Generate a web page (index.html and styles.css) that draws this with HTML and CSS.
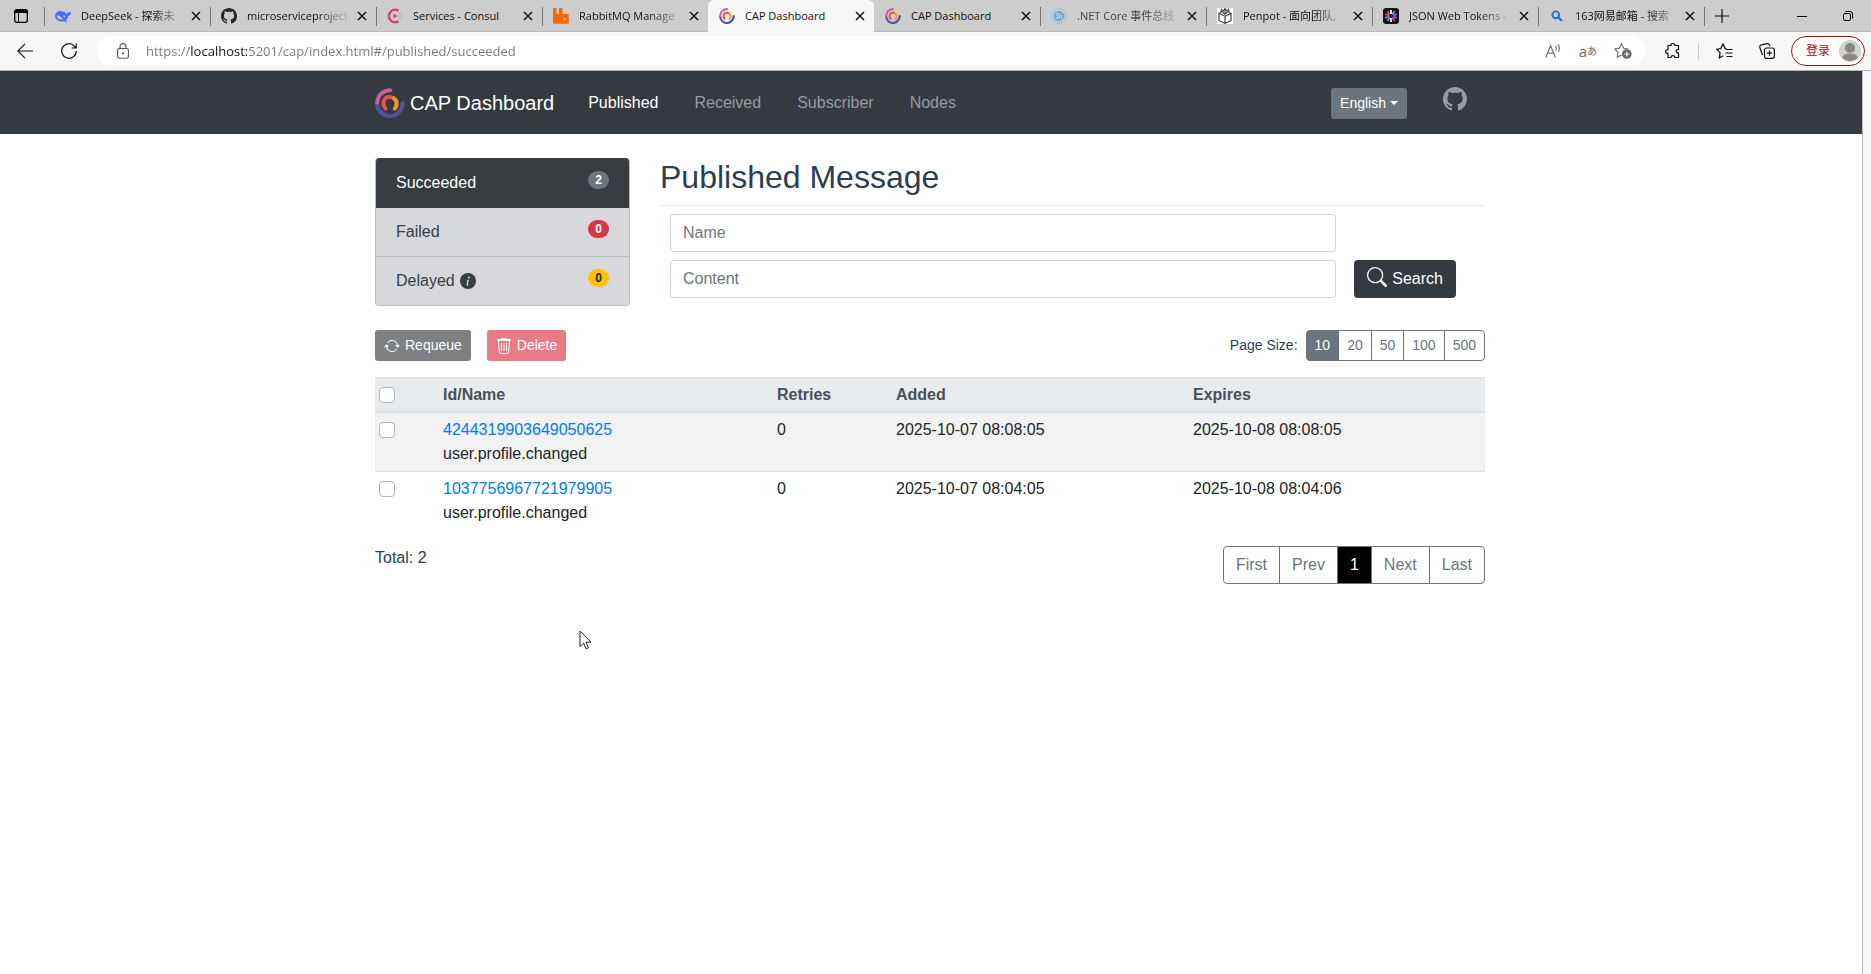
FILE: index.html
```html
<!DOCTYPE html>
<html lang="en">
<head>
<meta charset="utf-8">
<meta name="viewport" content="width=device-width, initial-scale=1">
<title>CAP Dashboard</title>
<link rel="stylesheet" href="styles.css">
</head>
<body>
<svg class="defs" aria-hidden="true">
  <symbol id="cap" viewBox="0 0 30 30"><g fill="none" stroke-width="4" stroke-linecap="round"><path stroke="#4b559f" stroke-linecap="butt" d="M2.200 16a12.600 12.600 0 0 0 25.300-1"/><path stroke="#4b559f" d="M27.500 15v.2"/><path stroke="#c65f9f" stroke-linecap="butt" d="M2.200 16.300C2 8 7 2.600 15 2.200"/><path stroke="#c65f9f" d="M15 2.200h.1"/><path stroke="#f7952b" d="M18 9.800c4.500 2 4.500 8 1.800 10.700"/><path stroke="#e8544a" d="M10.500 20.500C6 15 9.500 8 16 9.200"/></g></symbol>
  <symbol id="github" viewBox="0 0 16 16"><path d="M8 0C3.580 0 0 3.580 0 8c0 3.540 2.290 6.530 5.470 7.590.4.070.55-.17.55-.38 0-.19-.010-.82-.010-1.490-2.010.37-2.530-.49-2.690-.94-.09-.23-.48-.94-.82-1.130-.28-.15-.68-.52-.010-.53.63-.010 1.080.58 1.230.82.72 1.210 1.870.87 2.330.66.070-.52.28-.87.51-1.070-1.780-.2-3.640-.89-3.640-3.950 0-.87.31-1.590.82-2.150-.08-.2-.36-1.020.08-2.120 0 0 .67-.21 2.200.82.64-.18 1.320-.27 2-.27s1.360.09 2 .27c1.530-1.040 2.200-.82 2.200-.82.44 1.100.16 1.920.08 2.120.51.56.82 1.270.82 2.150 0 3.070-1.870 3.750-3.650 3.950.29.25.54.73.54 1.480 0 1.070-.010 1.930-.010 2.200 0 .21.15.46.55.38A8.010 8.010 0 0 0 16 8c0-4.420-3.580-8-8-8"/></symbol>
  <symbol id="close" viewBox="0 0 10 10"><path d="M1 1l8 8M9 1L1 9" fill="none" stroke="#111" stroke-width="1.500"/></symbol>
</svg>

<header class="browser">
  <div class="tabstrip">
    <button class="strip-btn tab-menu" aria-label="Tab actions menu"><svg width="14" height="14" viewBox="0 0 14 14"><rect x=".7" y=".7" width="12.600" height="12.600" rx="2" fill="none" stroke="#000" stroke-width="1.300"/><path d="M1 1h12v3H1z"/><path d="M4.500 4v9" stroke="#000"/></svg></button>
    <div class="tabs" role="tablist">
      <div class="tab" role="tab"><svg class="fav" viewBox="0 0 16 16"><path fill="#4d6bfe" d="M.2 8.500C.2 4.800 2.800 3 5.400 3c1.300 0 1.800.7 3 1 .4-1 1.300-.6 1.500.2.200 1 .8 1.700 1.500 2C11.200 4.900 12.400 5 13 4.200c.8.500 1.800.4 2.800-.7.4 2.400-.6 4.200-2.600 4.500-.1 2-1 3.300-2.200 4.500l1.200 1.200c-1.600.4-2.400.1-3.300-.5C4.400 14.300.2 12 .2 8.500z"/><path fill="#cdcdcd" d="M1.800 7.600c2.600-.5 5.100 1.500 6.300 4.300-1.200-.2-1.800-1-2.600-1.600-.3.600-.1 1.100.1 1.600C3 11 1.800 9.500 1.800 7.600zM8.200 7.200c1.300 0 2 .9 2 2.100-1.100.2-1.900-.8-2-2.100z"/></svg><span class="title fade">DeepSeek - 探索未</span><button class="x" aria-label="Close tab"><svg><use href="#close"/></svg></button></div>
      <div class="tab" role="tab"><svg class="fav gh"><use href="#github"/></svg><span class="title fade">microserviceproject</span><button class="x" aria-label="Close tab"><svg><use href="#close"/></svg></button></div>
      <div class="tab" role="tab"><svg class="fav" viewBox="0 0 16 16"><path d="M11.500 13.200A6.200 6.200 0 1 1 11.500 2.800" fill="none" stroke="#e03875" stroke-width="2.400"/><circle cx="7.800" cy="8" r="1.800" fill="#e03875"/><g fill="#e879a0"><circle cx="11.300" cy="8" r=".8"/><circle cx="13" cy="5.500" r=".7"/><circle cx="13" cy="10.500" r=".7"/><circle cx="14.600" cy="7" r=".6"/><circle cx="14.600" cy="9" r=".6"/></g></svg><span class="title">Services - Consul</span><button class="x" aria-label="Close tab"><svg><use href="#close"/></svg></button></div>
      <div class="tab" role="tab"><svg class="fav" viewBox="0 0 16 16"><path fill="#f60" fill-rule="evenodd" d="M.5 0H3q.5 0 .5.500v5q0 .6.600.6h1.300q.6 0 .6-.6v-5Q6 0 6.500 0H9q.5 0 .5.500v5q0 .6.600.6H15q.8 0 .8.800V15q0 .8-.8.800H.8Q0 15.800 0 15V.5Q0 0 .5 0zM10.300 10v2.500h2.500V10z"/></svg><span class="title fade">RabbitMQ Manage</span><button class="x" aria-label="Close tab"><svg><use href="#close"/></svg></button></div>
      <div class="tab active" role="tab" aria-selected="true"><svg class="fav"><use href="#cap"/></svg><span class="title">CAP Dashboard</span><button class="x" aria-label="Close tab"><svg><use href="#close"/></svg></button></div>
      <div class="tab" role="tab"><svg class="fav"><use href="#cap"/></svg><span class="title">CAP Dashboard</span><button class="x" aria-label="Close tab"><svg><use href="#close"/></svg></button></div>
      <div class="tab" role="tab"><svg class="fav" viewBox="0 0 16 16"><circle cx="8" cy="8" r="7.300" fill="none" stroke="#8fc3dc"/><circle cx="8" cy="8" r="5.300" fill="#7da3cf"/><g fill="none" stroke="#dbe6f0"><path d="M5.500 7.500a3 3 0 0 1 3 3M5.500 5.300a5.200 5.200 0 0 1 5.200 5.200"/></g><circle cx="6.200" cy="10" r=".8" fill="#dbe6f0"/></svg><span class="title fade muted">.NET Core 事件总线</span><button class="x" aria-label="Close tab"><svg><use href="#close"/></svg></button></div>
      <div class="tab" role="tab"><svg class="fav" viewBox="0 0 16 16"><path fill="#fff" d="M0 0h16v16H0z"/><g fill="none" stroke="#444" stroke-width="1.200"><path d="M2 5.500v7.200l6 2.600 6-2.600V5.500L8 8.200zM8 8.200v7M2 5.500l2-1M14 5.500l-2-1"/><path d="M4 5l.5-3.500L7 6M6 3l2-2.500L10 3M9 6l2.500-4.500L12 5M8 1v6"/></g></svg><span class="title fade">Penpot - 面向团队,</span><button class="x" aria-label="Close tab"><svg><use href="#close"/></svg></button></div>
      <div class="tab" role="tab"><svg class="fav" viewBox="0 0 16 16"><rect width="16" height="16" rx="3" fill="#16161a"/><g stroke-width="1.700"><path stroke="#fff" d="M8 2v4M8 10v4"/><path stroke="#00d7e8" d="M11.500 3.200L9.200 6.400M4.500 12.800l2.300-3.200"/><path stroke="#e94bd8" d="M13.700 6.100L9.900 7.400M2.300 9.900l3.800-1.300"/><path stroke="#7e5cf0" d="M13.700 9.900L9.900 8.600"/><path stroke="#ff4560" d="M4.500 3.200l2.300 3.200M2.300 6.100l3.800 1.300M11.500 12.800L9.200 9.600"/></g></svg><span class="title fade">JSON Web Tokens -</span><button class="x" aria-label="Close tab"><svg><use href="#close"/></svg></button></div>
      <div class="tab" role="tab"><svg class="fav" viewBox="0 0 16 16"><circle cx="6.800" cy="6.800" r="3.400" fill="none" stroke="#1b77cf" stroke-width="1.900"/><path d="M9.300 9.300l3.700 3.700" stroke="#1b77cf" stroke-width="2.200"/></svg><span class="title fade">163网易邮箱 - 搜索</span><button class="x" aria-label="Close tab"><svg><use href="#close"/></svg></button></div>
    </div>
    <button class="strip-btn new-tab" aria-label="New tab"><svg width="14" height="14" viewBox="0 0 14 14"><path d="M7 0v14M0 7h14" stroke="#111" stroke-width="1.200"/></svg></button>
    <div class="window-controls">
      <button class="strip-btn" aria-label="Minimize"><svg width="10" height="10" viewBox="0 0 10 10"><path d="M0 5.500h10" stroke="#000"/></svg></button>
      <button class="strip-btn" aria-label="Restore"><svg width="10" height="10" viewBox="0 0 10 10" fill="none" stroke="#000"><rect x=".5" y="2.500" width="7" height="7" rx="1.500"/><path d="M2.500.5H7A2.500 2.500 0 0 1 9.500 3v4.500"/></svg></button>
    </div>
  </div>

  <div class="toolbar">
    <button class="tool" aria-label="Back"><svg width="16" height="16" viewBox="0 0 16 16" fill="none" stroke="#111" stroke-width="1.100"><path d="M16 8H.8M8 .8L.8 8 8 15.200"/></svg></button>
    <button class="tool reload" aria-label="Reload"><svg width="16" height="16" viewBox="0 0 16 16" fill="none" stroke="#111" stroke-width="1.200"><path d="M15.300 8A7.300 7.300 0 1 1 13.400 3.100L15 5M15.200.5V5h-4.500"/></svg></button>
    <div class="address">
      <button class="tool" aria-label="Site information"><svg width="12" height="16" viewBox="0 0 12 16" fill="none" stroke="#555" stroke-width="1.100"><rect x=".6" y="5.500" width="10.800" height="9.800" rx="1.800"/><path d="M3 5.500V3.600a3 3 0 0 1 6 0v1.900"/><circle cx="6" cy="10.400" r=".6" fill="#555"/></svg></button>
      <input class="url" type="text" aria-label="Address" value="https://localhost:5201/cap/index.html#/published/succeeded">
      <button class="tool" aria-label="Read aloud"><svg width="17" height="16" viewBox="0 0 17 16" fill="none" stroke="#6a6a6a" stroke-width="1.100"><path d="M.8 14.500L5.600 2.500l4.800 12M2.500 10.300h6.200M10.200 3.200c1.300 1 1.300 3 .3 4.300M12.500 1.200c2.500 1.800 2.500 5.600.5 7.600"/></svg></button>
      <button class="tool translate" aria-label="Translate">a<small>あ</small></button>
      <button class="tool" aria-label="Add to favorites"><svg width="18" height="17" viewBox="0 0 18 17"><path d="M7.500 13L3.300 15.200l.8-4.800L.7 7l4.700-.7L7.500 1.500l2.200 4.800 4.600.7" fill="none" stroke="#6a6a6a" stroke-width="1.100"/><circle cx="12.800" cy="12" r="4.800" fill="#666"/><path d="M12.800 9.500v5M10.300 12h5" stroke="#fff" stroke-width="1.100"/></svg></button>
    </div>
    <button class="tool" aria-label="Extensions"><svg width="16" height="16" viewBox="0 0 16 16" fill="none" stroke="#111" stroke-width="1.200" stroke-linejoin="round"><path d="M3 2.500h3C5.800-.2 10-.2 9.800 2.500H13.500v4.200c-3.200-.4-3.200 3.600 0 3.200v4.600H9.800c.2-2.600-4-2.600-3.800 0H3v-4C-.2 10.800-.2 6.300 3 6.700z"/></svg></button>
    <span class="sep"></span>
    <button class="tool" aria-label="Favorites"><svg width="17" height="16" viewBox="0 0 17 16" fill="none" stroke="#111" stroke-width="1.200"><path d="M10.500 5.800L9.200 5.600 7 .9 4.800 5.600.7 6.200l3.400 3.400-.8 5.200L7 12.800M10 6.500h6.500M9.500 10h7M10.500 13.500h6"/></svg></button>
    <button class="tool" aria-label="Collections"><svg width="16" height="16" viewBox="0 0 16 16" fill="none" stroke="#111" stroke-width="1.200"><rect x="5.500" y="5" width="9.900" height="10.300" rx="2"/><path d="M10.500 7.500v5.300M7.800 10.200h5.300M3.500 12L1 5Q.2 2.500 2.500 1.800L8 .7Q10.300.2 11 2.800"/></svg></button>
    <button class="login" lang="zh">登录<svg width="22" height="22" viewBox="0 0 22 22"><circle cx="11" cy="11" r="11" fill="#d2d0ce"/><circle cx="11" cy="8" r="5" fill="#8a8684"/><path d="M3.500 18c0-3 3-4.500 7.500-4.500s7.500 1.500 7.500 4.500a11 11 0 0 1-15 0z" fill="#8a8684"/></svg></button>
  </div>
</header>

<div class="page">
  <nav class="navbar">
    <div class="container">
      <a class="brand" href="#/"><svg width="30" height="30"><use href="#cap"/></svg>CAP Dashboard</a>
      <a class="nav-link current" href="#/published">Published</a>
      <a class="nav-link" href="#/received">Received</a>
      <a class="nav-link" href="#/subscriber">Subscriber</a>
      <a class="nav-link" href="#/nodes">Nodes</a>
      <button class="btn-sm lang" aria-haspopup="true">English<span class="caret"></span></button>
      <a class="repo" href="#github" aria-label="GitHub"><svg width="24" height="24"><use href="#github"/></svg></a>
    </div>
  </nav>

  <main class="container content">
    <div class="top">
      <aside class="list">
        <a class="item on" href="#/published/succeeded"><span>Succeeded</span><span class="badge grey">2</span></a>
        <a class="item" href="#/published/failed"><span>Failed</span><span class="badge red">0</span></a>
        <a class="item" href="#/published/delayed"><span class="delayed">Delayed <svg width="16" height="16" viewBox="0 0 16 16"><circle cx="8" cy="8" r="8" fill="#383d41"/><path fill="#d6d8db" d="M8.930 6.588l-2.290.287-.082.380.450.083c.294.070.352.176.288.469l-.738 3.468c-.194.897.105 1.319.808 1.319.545 0 1.178-.252 1.465-.598l.088-.416c-.2.176-.492.246-.686.246-.275 0-.375-.193-.304-.533z"/><circle cx="9" cy="4.500" r="1" fill="#d6d8db"/></svg></span><span class="badge yellow">0</span></a>
      </aside>
      <section class="filter">
        <h1>Published Message</h1>
        <form class="search">
          <input class="field" type="text" placeholder="Name" aria-label="Name">
          <input class="field" type="text" placeholder="Content" aria-label="Content">
          <button class="btn-search" type="button"><svg width="20" height="20" viewBox="0 0 16 16" fill="#fff"><path d="M11.742 10.344a6.500 6.500 0 1 0-1.397 1.398h-.001q.044.060.098.115l3.850 3.850a1 1 0 0 0 1.415-1.414l-3.850-3.850a1 1 0 0 0-.115-.1zM12 6.500a5.500 5.500 0 1 1-11 0 5.500 5.500 0 0 1 11 0"/></svg>Search</button>
        </form>
      </section>
    </div>

    <div class="actions">
      <button class="btn-sm requeue"><svg width="16" height="16" viewBox="0 0 16 16" fill="#fff"><path d="M11.534 7h3.932a.25.25 0 0 1 .192.410l-1.966 2.360a.25.25 0 0 1-.384 0l-1.966-2.360a.25.25 0 0 1 .192-.410zm-11 2h3.932a.25.25 0 0 0 .192-.410L2.692 6.230a.25.25 0 0 0-.384 0L.342 8.590A.25.25 0 0 0 .534 9z"/><path d="M8 3c-1.552 0-2.940.707-3.857 1.818a.5.5 0 1 1-.771-.636A6.002 6.002 0 0 1 13.917 7H12.900A5 5 0 0 0 8 3M3.100 9a5.002 5.002 0 0 0 8.757 2.182.5.5 0 1 1 .771.636A6.002 6.002 0 0 1 2.083 9z"/></svg>Requeue</button>
      <button class="btn-sm delete"><svg width="16" height="16" viewBox="0 0 16 16" fill="none" stroke="#fff"><path d="M1.500 2.500h13v-1h-13zM5.500 1.200V.5h5v.7M2.500 3l.8 11q.1 1.500 1.500 1.500h6.400q1.400 0 1.500-1.500l.8-11M8 5v8M5.200 5l.4 8M10.800 5l-.4 8"/></svg>Delete</button>
      <span class="size-label" id="size-label">Page Size:</span>
      <div class="group small" role="group" aria-labelledby="size-label">
        <button class="on">10</button><button>20</button><button>50</button><button>100</button><button>500</button>
      </div>
    </div>

    <table class="messages">
      <colgroup><col class="c-check"><col class="c-name"><col class="c-retries"><col class="c-date"><col class="c-date"></colgroup>
      <thead><tr><th><input type="checkbox" aria-label="Select all"></th><th>Id/Name</th><th>Retries</th><th>Added</th><th>Expires</th></tr></thead>
      <tbody>
        <tr><td><input type="checkbox" aria-label="Select 4244319903649050625"></td><td><a href="#m1">4244319903649050625</a><br>user.profile.changed</td><td>0</td><td>2025-10-07 08:08:05</td><td>2025-10-08 08:08:05</td></tr>
        <tr><td><input type="checkbox" aria-label="Select 1037756967721979905"></td><td><a href="#m2">1037756967721979905</a><br>user.profile.changed</td><td>0</td><td>2025-10-07 08:04:05</td><td>2025-10-08 08:04:06</td></tr>
      </tbody>
    </table>

    <div class="footer">
      <span>Total: 2</span>
      <div class="group pager" role="group" aria-label="Pagination">
        <button>First</button><button>Prev</button><button class="on">1</button><button>Next</button><button>Last</button>
      </div>
    </div>
  </main>
</div>
<svg class="cursor" width="13" height="20" viewBox="0 0 13 20" aria-hidden="true"><path d="M1 1v15.500l3.600-3.400 2.500 5.700 2.300-1-2.400-5.600H12z" fill="#fff" stroke="#1c1c2b"/></svg>
</body>
</html>
```
FILE: styles.css
```css
* { box-sizing: border-box; }

body {
  margin: 0;
  min-height: 100vh;
  display: flex;
  flex-direction: column;
  background: #f7f7f7;
  color: #2c3e50;
  font: 16px/24px "Liberation Sans", Arial, sans-serif;
}

button, input { font: inherit; margin: 0; }
button { cursor: default; white-space: nowrap; }
a { color: #007bff; text-decoration: none; }
svg { flex: none; }
.defs { position: absolute; width: 0; height: 0; }

/* Browser frame */
.browser { font-family: "Open Sans", "Noto Sans CJK SC", sans-serif; }

.tabstrip {
  display: flex;
  align-items: stretch;
  height: 32px;
  background: #cdcdcd;
  box-shadow: inset 0 -1px #bcbcbc;
}
.strip-btn, .tool, .x {
  display: flex;
  align-items: center;
  justify-content: center;
  padding: 0;
  border: 0;
  background: none;
}
.tab-menu { width: 44px; padding-right: 2px; }
.tabs { display: flex; flex: 0 1 1660px; min-width: 0; }
.tab {
  display: flex;
  flex: 1 1 0;
  align-items: center;
  min-width: 0;
  padding: 0 9px 0 11px;
  background: linear-gradient(#777, #777) left 7px / 1px 19px no-repeat;
  color: #111;
  font-size: 11px;
  line-height: 18px;
}
.fav { width: 16px; height: 16px; margin-right: 10px; }
.gh { fill: #24292f; }
.title { flex: 1; overflow: hidden; white-space: nowrap; }
.fade {
  -webkit-mask-image: linear-gradient(90deg, #000 70%, transparent 105%);
  mask-image: linear-gradient(90deg, #000 70%, transparent 105%);
}
.muted { color: #444; }
.x { width: 10px; height: 16px; margin-left: 10px; }
.x svg { width: 10px; height: 10px; }
.tab.active {
  background: #f7f7f7;
  border-radius: 6px 6px 0 0;
}
.tab.active + .tab { background: none; }
.new-tab {
  width: 36px;
  background: linear-gradient(#777, #777) left 7px / 1px 19px no-repeat;
}
.window-controls { display: flex; margin-left: auto; }
.window-controls .strip-btn { width: 46px; }

.toolbar {
  display: flex;
  align-items: center;
  gap: 26px;
  height: 39px;
  padding: 0 6px 1px 17px;
  background: #f7f7f7;
  border-bottom: 1px solid #aeb2b2;
}
.reload { margin-left: 2px; }
.address {
  display: flex;
  flex: 1;
  align-items: center;
  gap: 17px;
  height: 30px;
  margin: 0 -6px;
  padding: 0 13px 0 20px;
  border-radius: 15px;
  background: #fff;
}
.url {
  flex: 1;
  min-width: 0;
  padding: 0;
  border: 0;
  outline: 0;
  background: linear-gradient(90deg, #767676 45px, #111 45px 101px, #767676 101px);
  -webkit-background-clip: text;
  background-clip: text;
  color: transparent;
  font-size: 13px;
  line-height: 20px;
}
.translate { color: #6a6a6a; font-size: 15px; }
.translate small { font-size: 10px; }
.sep { width: 1px; height: 16px; margin: 0 -9px; background: #c8c8c8; }
.login {
  display: flex;
  align-items: center;
  gap: 9px;
  height: 30px;
  margin-left: -10px;
  padding: 0 3px 0 14px;
  border: 1px solid #a80f14;
  border-radius: 15px;
  background: #fff;
  color: #a80f14;
  font-size: 12px;
}

/* Page */
.page {
  flex: 1;
  margin-right: 8px;
  border-right: 1px solid #bbb;
  background: #fff;
}
.container {
  width: 100%;
  max-width: 1140px;
  margin: 0 auto;
  padding: 0 16px 0 14px;
}
.navbar { background: #343a40; padding: 16px 0 15px; }
.navbar .container { display: flex; align-items: center; }
.brand {
  display: flex;
  align-items: center;
  gap: 5px;
  margin-right: 34px;
  color: #fff;
  font-size: 20px;
  line-height: 30px;
}
.nav-link { margin-right: 36px; color: #999c9f; }
.nav-link.current { color: #fff; }
.btn-sm {
  display: flex;
  align-items: center;
  gap: 5px;
  padding: 4px 8px;
  border: 1px solid transparent;
  border-radius: 3px;
  color: #fff;
  font-size: 14px;
  line-height: 21px;
}
.lang { gap: 4px; margin-left: auto; background: #6c757d; }
.caret { border: 4px solid transparent; border-top-color: #fff; border-bottom: 0; }
.repo { height: 32px; margin: 0 18px 0 36px; }
.repo svg { fill: #999c9f; }

.content { padding-top: 24px; }
.top { display: grid; grid-template-columns: 255px 1fr; gap: 30px; align-items: start; }

.list {
  overflow: hidden;
  border: 1px solid #bbbdc0;
  border-top: 0;
  border-radius: 4px;
}
.item {
  display: flex;
  justify-content: space-between;
  align-items: flex-start;
  padding: 12px 20px;
  border-top: 1px solid #bbbdc0;
  background: #d6d8db;
  color: #383d41;
}
.item.on { margin: 0 -1px; padding: 13px 21px 12px; border-top: 0; background: #383d41; color: #fff; }
.item.on + .item { border-top-color: #383d41; }
.delayed { display: flex; align-items: center; gap: 5px; }
.badge {
  padding: 3px 7px;
  border-radius: 9px;
  color: #fff;
  font-size: 12px;
  font-weight: 700;
  line-height: 12px;
}
.grey { background: #6c757d; }
.red { background: #dc3545; }
.yellow { background: #ffc107; color: #212529; }

h1 {
  margin: 0 0 8px;
  padding-bottom: 9px;
  border-bottom: 1px solid #e9ebec;
  font-size: 32px;
  font-weight: 400;
  line-height: 38px;
}
.search {
  display: grid;
  grid-template-columns: 1fr auto;
  gap: 8px 18px;
  padding: 0 29px 0 10px;
}
.field {
  grid-column: 1;
  height: 38px;
  min-width: 0;
  padding: 6px 12px;
  border: 1px solid #ced4da;
  border-radius: 4px;
  background: #fff;
}
.field::placeholder { color: #6c757d; opacity: 1; }
.btn-search {
  display: flex;
  align-items: center;
  gap: 5px;
  padding: 6px 13px;
  border: 0;
  border-radius: 4px;
  background: #343a40;
  color: #fff;
}
.btn-search svg { margin-top: -4px; }

.actions { display: flex; align-items: center; gap: 16px; margin-top: 24px; }
.requeue { background: #7d8184; }
.delete { background: #e77c87; }
.size-label { margin: 0 -8px 0 auto; font-size: 14px; line-height: 21px; }

.group { display: flex; }
.group button {
  margin-left: -1px;
  padding: 6px 12px;
  border: 1px solid #6c757d;
  background: #fff;
  color: #6c757d;
}
.group button:first-child { margin-left: 0; border-radius: 4px 0 0 4px; }
.group button:last-child { border-radius: 0 4px 4px 0; }
.group .on { background: #6c757d; color: #fff; }
.small button { padding: 4px 8px; font-size: 14px; line-height: 21px; }
.pager .on { background: #000; }

.messages {
  width: 100%;
  margin-top: 16px;
  border-collapse: separate;
  border-spacing: 0;
  table-layout: fixed;
  color: #212529;
}
.c-check { width: 63px; }
.c-name { width: 334px; }
.c-retries { width: 119px; }
.messages th, .messages td {
  padding: 5px;
  border-top: 1px solid #dee2e6;
  text-align: left;
  vertical-align: top;
}
.messages th {
  padding-bottom: 4px;
  border-bottom: 2px solid #dee2e6;
  background: #e9ecef;
  color: #495057;
}
.messages tbody tr:first-child td { border-top: 0; }
.messages tbody tr:nth-child(odd) { background: #f2f2f2; }
.messages input {
  display: block;
  width: 16px;
  height: 16px;
  margin: 4px 0 0 -1px;
  border: 1px solid #adb5bd;
  border-radius: 4px;
  background: #fff;
  appearance: none;
}

.footer { display: flex; justify-content: space-between; align-items: flex-start; margin-top: 16px; }

.cursor { position: absolute; left: 579px; top: 630px; }
```
